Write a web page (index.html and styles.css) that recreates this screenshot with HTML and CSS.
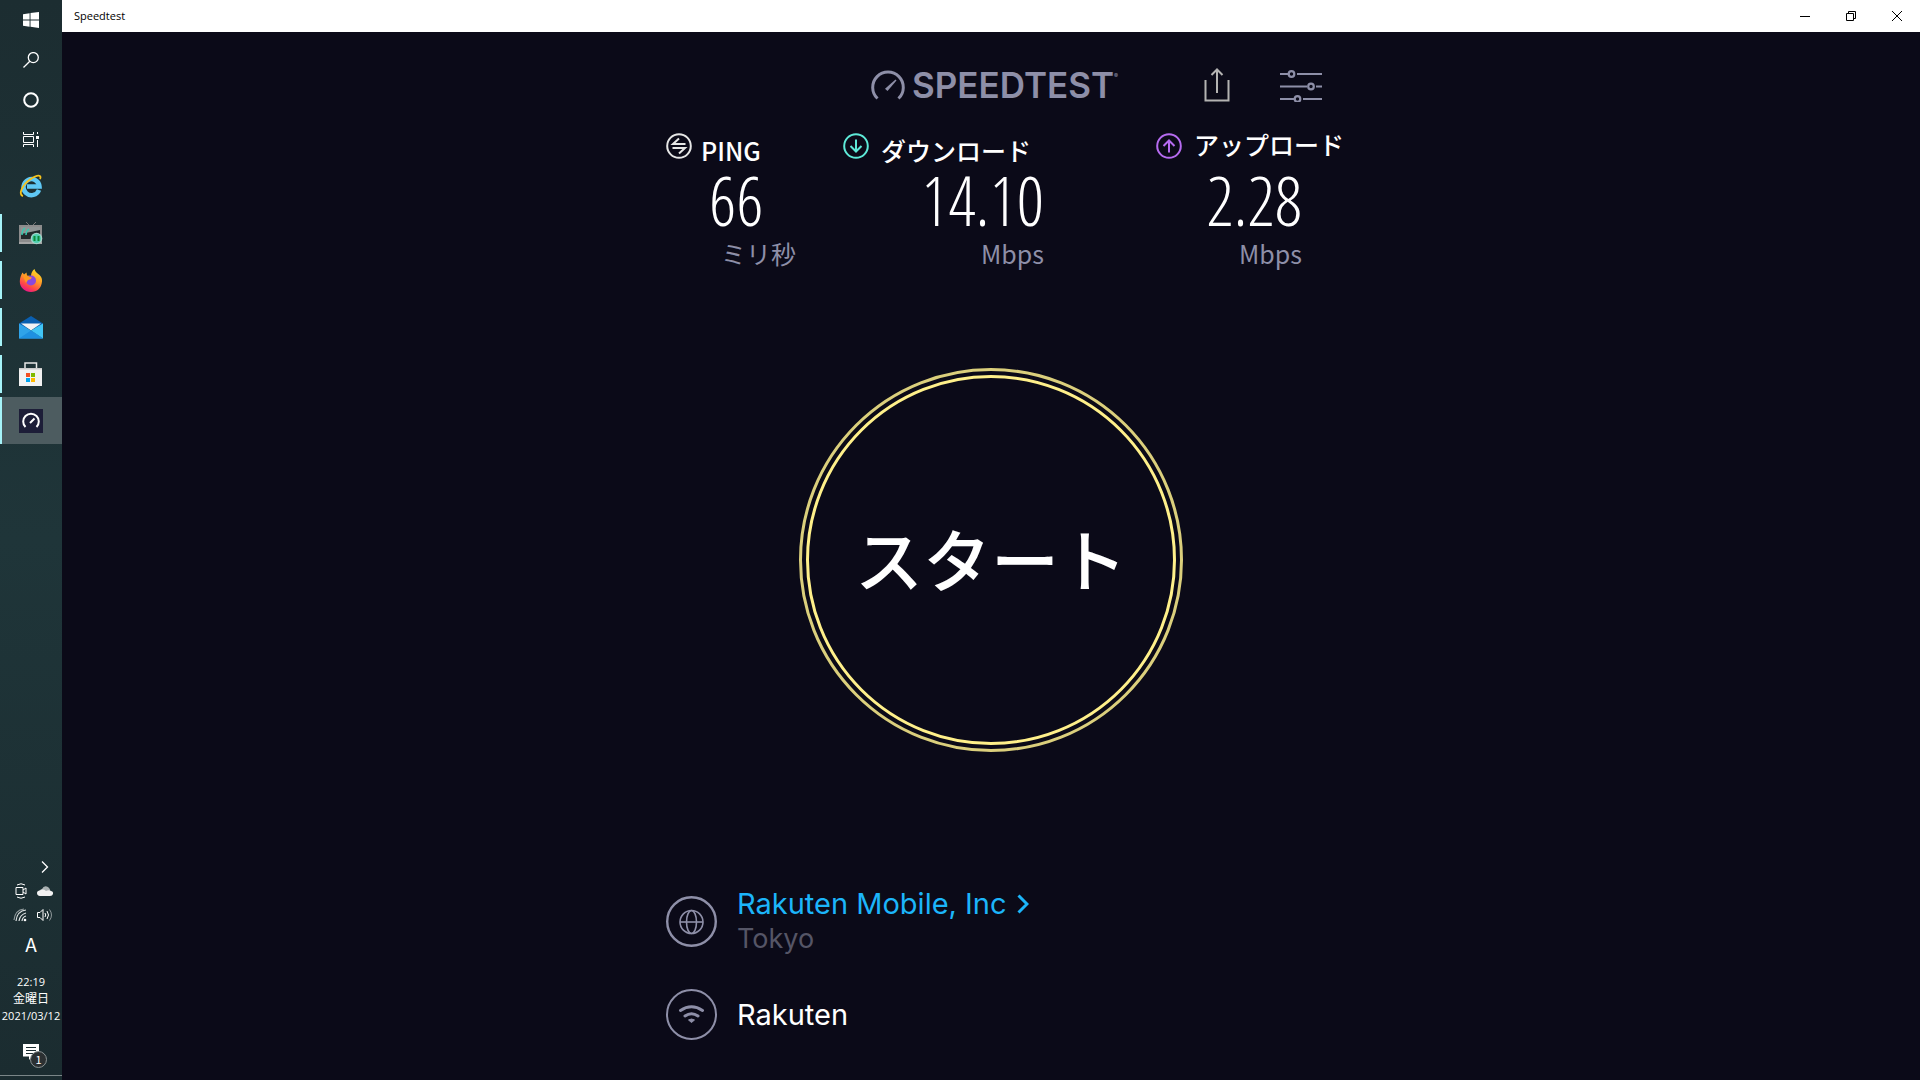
FILE: index.html
```html
<!DOCTYPE html>
<html lang="ja">

<head>
    <meta charset="UTF-8">
    <meta name="viewport" content="width=device-width, initial-scale=1.0">
    <title>Speedtest</title>
    <link rel="stylesheet" href="styles.css">
</head>

<body>
    <nav class="taskbar">
        <div class="system-buttons">
            <button class="task" type="button" aria-label="Start">
                <svg width="16" height="16" viewBox="0 0 16 16" fill="#fff"><path d="M0 2.2L6.6 1.2V7.5H0zM7.5 1.1L16 0v7.5H7.5zM0 8.4h6.6v6.3L0 13.8zM7.5 8.4H16V16l-8.5-1.2z"/></svg>
            </button>
            <button class="task" type="button" aria-label="Search">
                <svg width="16" height="16" viewBox="0 0 16 16" fill="none" stroke="#fff" stroke-width="1.3"><circle cx="10.3" cy="5.6" r="5"/><path d="M6.8 9.2L.5 15.5"/></svg>
            </button>
            <button class="task" type="button" aria-label="Cortana">
                <svg width="16" height="16" viewBox="0 0 16 16" fill="none" stroke="#fff" stroke-width="2"><circle cx="8" cy="8" r="6.8"/></svg>
            </button>
            <button class="task" type="button" aria-label="Task view">
                <svg width="16" height="16" viewBox="0 0 16 16" fill="none" stroke="#fff"><path d="M.5 0v2.5h10V0M.5 15v-2.5h10V15M.5 4.500h10v6H.5zM14.500 0v2M14.500 8v7"/><path d="M13 4h3v3h-3z" fill="#fff" stroke="none"/></svg>
            </button>
        </div>
        <div class="pinned-apps">
            <button class="task" type="button" aria-label="Internet Explorer">
                <svg width="24" height="24" viewBox="0 0 24 24" fill="none">
                    <path d="M20 16A8 8 0 1 1 20.500 12.500H8" stroke="#5fc8f5" stroke-width="4.500"/>
                    <path d="M4 22C-1 21 3 11 11 5.500S23 1 21 5" stroke="#f5c21d" stroke-width="1.800"/>
                </svg>
            </button>
            <button class="task running" type="button" aria-label="TV">
                <svg width="24" height="24" viewBox="0 0 24 24">
                    <path d="M7 1l3 3M17 1l-3 3" stroke="#777"/>
                    <path d="M0 4h23v17H0z" fill="#8c8c8c"/>
                    <path d="M2 6h19v12H2z" fill="#22292b"/>
                    <path d="M2 6h19v3L2 13z" fill="#8f9595"/>
                    <path d="M3 14q0-5 3-7M7 14q0-4 3-6" stroke="#38c9ae" stroke-width="1.500" fill="none"/>
                    <path d="M0 21h23v2H0z" fill="#a5a5a5"/>
                    <circle cx="17.500" cy="17.500" r="5.800" fill="#a5d3ca"/>
                    <circle cx="17.500" cy="17.500" r="4.500" fill="#4fcfae"/>
                    <path d="M14.500 15h2v5h-2zM18.500 15h2v5h-2z" fill="#0d8a3a"/>
                </svg>
            </button>
            <button class="task running" type="button" aria-label="Firefox">
                <svg width="24" height="24" viewBox="0 0 24 24">
                    <defs>
                        <linearGradient id="fox" x1=".8" y1="0" x2=".3" y2="1">
                            <stop offset="0" stop-color="#ffe226"/>
                            <stop offset=".45" stop-color="#ff9a28"/>
                            <stop offset=".75" stop-color="#ff4a45"/>
                            <stop offset="1" stop-color="#e8118c"/>
                        </linearGradient>
                    </defs>
                    <path d="M3.500 4.500l1.500 2 2.500-2 .5 3 4 .5C12 5 13.500 2.500 15.500 1c.5 3 3 4 5 6 2 2 2.800 4 2.500 6.500C22.500 20 18 24 12 24S.8 19.500.8 13.500c0-3.500 1.200-6.500 2.700-9z" fill="url(#fox)"/>
                    <circle cx="12" cy="12.500" r="5" fill="#8a48dd"/>
                    <path d="M4 8q4-1 7 1l2 .5q-1 2-4 2.500l-2 3z" fill="#ff9a20"/>
                </svg>
            </button>
            <button class="task running" type="button" aria-label="Mail">
                <svg width="24" height="24" viewBox="0 0 24 24">
                    <path d="M0 8.500L12 1l12 7.500v5H0z" fill="#0a5fb0"/>
                    <path d="M2 8.500h20l-10 7z" fill="#f3f3f5"/>
                    <path d="M0 8.500l12 7 12 8H0z" fill="#2fa3e9"/>
                    <path d="M24 8.500l-12 7 12 8z" fill="#41c5f5"/>
                    <path d="M12 15.500l12 8H0z" fill="#1e90e0"/>
                </svg>
            </button>
            <button class="task running" type="button" aria-label="Microsoft Store">
                <svg width="24" height="24" viewBox="0 0 24 24">
                    <path d="M6 7V1h11.500v6" fill="none" stroke="#e8e8e8" stroke-width="1.500"/>
                    <path d="M0 6h23v18H0z" fill="#f2f2f2"/>
                    <path d="M0 6h23v1.500H0z" fill="#ccc"/>
                    <path d="M7 11h4v4H7z" fill="#f25022"/><path d="M12 11h4v4h-4z" fill="#7fba00"/>
                    <path d="M7 16h4v4H7z" fill="#00a4ef"/><path d="M12 16h4v4h-4z" fill="#ffb900"/>
                </svg>
            </button>
            <button class="task running active" type="button" aria-label="Speedtest">
                <svg width="24" height="24" viewBox="0 0 24 24" fill="none" stroke="#fff" stroke-width="2">
                    <path d="M0 0h24v24H0z" fill="#1d1e38" stroke="none"/>
                    <path d="M6.500 18A7.800 7.800 0 1 1 17.500 18M11 14l4.500-4.500"/>
                </svg>
            </button>
        </div>
        <div class="tray">
            <div class="tray-icons">
                <span></span>
                <button class="tray-button" type="button" aria-label="Show hidden icons">
                    <svg width="16" height="16" viewBox="0 0 16 16" fill="none" stroke="#fff" stroke-width="1.300"><path d="M5 2.500L10.500 8 5 13.500"/></svg>
                </button>
                <svg width="16" height="16" viewBox="0 0 16 16" fill="none" stroke="#fff"><path d="M3 4.500h7v7H3zM10 7l3-2v6l-3-2M4 2q4-2.500 8 0M4 14q4 2.500 8 0"/></svg>
                <svg width="16" height="16" viewBox="0 0 16 16"><path d="M2 11q-1-4 3-5 2-4 6-2 3 2 2 6z" fill="#a9b0b1"/><path d="M3 13q-3-.5-3-3t3-2.500q3-2 6 .5 3-1.500 5 0 2.500.5 2 3-.5 2-3 2z" fill="#f2f2f2"/></svg>
                <svg width="16" height="16" viewBox="0 0 16 16" fill="none" stroke="#dfe4e4" stroke-width="1.200"><path d="M3 14Q4 4 13 3M6 14q1-6.500 7-8M9 14q.5-4 4-5" /><path d="M1 13Q2 3 11 2" opacity=".6"/><circle cx="12" cy="13" r="1.300" fill="#fff" stroke="none"/></svg>
                <svg width="16" height="16" viewBox="0 0 16 16" fill="none" stroke="#fff"><path d="M.5 5.500H3l3-3v11l-3-3H.5zM8 6q1.500 2 0 4M10 4q3 4 0 8"/><path d="M12.500 2.500q4 5.500 0 11" opacity=".5"/></svg>
            </div>
            <button class="ime" type="button">A</button>
            <div class="clock">
                <span>22:19</span>
                <span class="weekday">金曜日</span>
                <span>2021/03/12</span>
            </div>
            <button class="notifications" type="button" aria-label="Notifications">
                <svg width="16" height="16" viewBox="0 0 16 16"><path d="M0 0h16v12.500H9L6 16v-3.500H0z" fill="#fff"/><path d="M3 3.500h10M3 6.500h10M3 9.500h7" stroke="#1c2d31"/></svg>
                <span class="badge">1</span>
            </button>
        </div>
    </nav>

    <div class="window">
        <header class="title-bar">
            <span class="window-title">Speedtest</span>
            <button class="window-button" type="button" aria-label="Minimize">
                <svg width="10" height="10" viewBox="0 0 10 10" stroke="#000"><path d="M0 5.500h10"/></svg>
            </button>
            <button class="window-button" type="button" aria-label="Restore">
                <svg width="10" height="10" viewBox="0 0 10 10" stroke="#000" fill="none"><path d="M.5 2.500h7v7h-7zM2.500 2.500v-2h7v7h-2"/></svg>
            </button>
            <button class="window-button" type="button" aria-label="Close">
                <svg width="10" height="10" viewBox="0 0 10 10" stroke="#000"><path d="M0 0l10 10M10 0L0 10"/></svg>
            </button>
        </header>

        <main class="app">
            <div class="app-header">
                <h1 class="logo">
                    <svg width="34" height="30" viewBox="0 0 34 30" fill="none" stroke="#8e8fa8" stroke-width="3"><path d="M6.500 28.500a15.300 15.300 0 1 1 21 0"/><path d="M14 18.800L24.500 9.500l1 1L16.500 21z" fill="#8e8fa8" stroke="none"/></svg>
                    <span>SPEEDTEST<sup>®</sup></span>
                </h1>
                <button class="share" type="button" aria-label="Share">
                    <svg width="26" height="34" viewBox="0 0 26 34" fill="none" stroke="#b4b3b2" stroke-width="2"><path d="M1.500 12v20.500h23V12M13 25V2M7.500 7L13 1.500 18.500 7"/></svg>
                </button>
                <button class="settings" type="button" aria-label="Settings">
                    <svg width="42" height="34" viewBox="0 0 42 34" fill="none" stroke="#8e8fa8" stroke-width="2.200"><path d="M0 6h8M17 6h25M0 18.500h27M36 18.500h6M0 31h14M23 31h19"/><circle cx="11.500" cy="6" r="2.800"/><circle cx="31" cy="18.500" r="2.800"/><circle cx="17.500" cy="31" r="2.800"/></svg>
                </button>
            </div>

            <section class="stats">
                <div class="stat ping">
                    <h2 class="stat-label">
                        <svg width="26" height="26" viewBox="0 0 26 26" fill="none" stroke="#e6e6e6" stroke-width="2"><circle cx="13" cy="13" r="11.800"/><path d="M19.500 11H7l6-5.500M6.500 15H19l-6 5.500"/></svg>
                        <span>PING</span>
                    </h2>
                    <p class="value">66</p>
                    <p class="unit">ミリ秒</p>
                </div>
                <div class="stat download">
                    <h2 class="stat-label">
                        <svg width="26" height="26" viewBox="0 0 26 26" fill="none" stroke="#5eead8" stroke-width="2"><circle cx="13" cy="13" r="11.800"/><path d="M13 6.500v12M7.500 13l5.500 5.500 5.500-5.500"/></svg>
                        <span>ダウンロード</span>
                    </h2>
                    <p class="value">14.10</p>
                    <p class="unit">Mbps</p>
                </div>
                <div class="stat upload">
                    <h2 class="stat-label">
                        <svg width="26" height="26" viewBox="0 0 26 26" fill="none" stroke="#b66bf0" stroke-width="2"><circle cx="13" cy="13" r="11.800"/><path d="M13 19.500v-12M7.500 13L13 7.500l5.500 5.500"/></svg>
                        <span>アップロード</span>
                    </h2>
                    <p class="value">2.28</p>
                    <p class="unit">Mbps</p>
                </div>
            </section>

            <div class="start-area">
                <button class="start" type="button"><span>スタート</span></button>
            </div>

            <section class="connections">
                <div class="connection">
                    <svg width="51" height="51" viewBox="0 0 51 51" fill="none" stroke="#8e8fa8" stroke-width="2"><circle cx="25.500" cy="25.500" r="24.300" stroke-width="2.400"/><g stroke-width="1.600"><circle cx="25.500" cy="26" r="11.500"/><ellipse cx="25.500" cy="26" rx="5" ry="11.500"/><path d="M14 26h23"/></g></svg>
                    <div>
                        <a class="server" href="#">Rakuten Mobile, Inc
                            <svg width="12" height="20" viewBox="0 0 12 20" fill="none" stroke="#1cb5fa" stroke-width="3"><path d="M1.500 1.500L10 10l-8.500 8.500"/></svg>
                        </a>
                        <p class="city">Tokyo</p>
                    </div>
                </div>
                <div class="connection">
                    <svg width="51" height="51" viewBox="0 0 51 51" fill="none" stroke="#8e8fa8"><circle cx="25.500" cy="25.500" r="24.500" stroke-width="2"/><path d="M14.500 21.500q11-7.500 22 0M19 27q6.500-4.500 13 0" stroke-width="3" stroke-linecap="round"/><path d="M22.500 31q3-2 6 0l-3 2.500z" fill="#8e8fa8"/></svg>
                    <p class="network">Rakuten</p>
                </div>
            </section>
        </main>
    </div>
</body>

</html>
```
FILE: styles.css
```css
* {
    box-sizing: border-box;
}

body {
    display: flex;
    min-height: 100vh;
    margin: 0;
    background-color: #0b0a18;
    color: #fff;
    font-family: "Noto Sans CJK JP", sans-serif;
}

h1,
h2,
p {
    margin: 0;
    font-weight: normal;
}

button {
    display: flex;
    align-items: center;
    justify-content: center;
    padding: 0;
    border: none;
    background: none;
    color: inherit;
    font-family: inherit;
    cursor: pointer;
}

svg {
    display: block;
    flex-shrink: 0;
}

/* Taskbar */
.taskbar {
    display: flex;
    flex-direction: column;
    flex-shrink: 0;
    width: 62px;
    background: linear-gradient(#1c2d31, #1f3539 50%, #1b2c30);
}

.task {
    width: 100%;
    height: 40px;
}

.pinned-apps {
    padding-top: 2px;
}

.pinned-apps .task {
    height: 47px;
}

.running::before {
    content: "";
    width: 2px;
    height: 38px;
    background-color: #a5f3f8;
}

.running svg {
    margin: 0 auto;
}

.running {
    padding-right: 2px;
}

.active {
    background-color: #4d5c60;
}

.active::before {
    height: 100%;
}

.tray {
    display: flex;
    flex-direction: column;
    align-items: center;
    margin-top: auto;
    padding-bottom: 15px;
    border-bottom: 1px solid #7b8688;
    margin-bottom: 4px;
}

.tray-icons {
    display: grid;
    grid-template-columns: 16px 16px;
    gap: 8px;
    padding-left: 4px;
}

.ime {
    height: 40px;
    font-size: 19px;
}

.clock {
    display: flex;
    flex-direction: column;
    align-items: center;
    margin-top: 10px;
    font-family: "Open Sans", "Noto Sans CJK JP", sans-serif;
    font-size: 11px;
    line-height: 17px;
}

.weekday {
    font-size: 12px;
}

.notifications {
    position: relative;
    margin-top: 20px;
}

.badge {
    position: absolute;
    top: 7px;
    left: 7px;
    width: 17px;
    height: 17px;
    border: 1px solid #8b9394;
    border-radius: 50%;
    background-color: #2b3032;
    font-size: 11px;
    line-height: 15px;
}

/* Window */
.window {
    display: flex;
    flex: 1;
    flex-direction: column;
}

.title-bar {
    display: flex;
    height: 32px;
    background-color: #fff;
    color: #000;
}

.window-title {
    flex: 1;
    padding-left: 12px;
    font-family: "Open Sans", sans-serif;
    font-size: 11px;
    line-height: 32px;
}

.window-button {
    width: 46px;
}

.app {
    display: flex;
    flex: 1;
    flex-direction: column;
    width: 100%;
    max-width: 702px;
    margin: 0 auto;
    padding: 36px 0 40px;
}

.app-header {
    display: flex;
    align-items: center;
    padding-left: 231px;
}

.logo {
    display: flex;
    align-items: center;
    gap: 7px;
    width: 333px;
    color: #8e8fa8;
    font-family: Inter, sans-serif;
    font-size: 35px;
    font-weight: 600;
    line-height: 34px;
}

.logo sup {
    font-size: 6px;
    line-height: 0;
    vertical-align: 20px;
}

.settings {
    margin-left: 50px;
}

/* Results */
.stats {
    display: grid;
    grid-template-columns: 177px 313px 1fr;
    padding: 31px 0 0 26px;
}

.stat-label {
    display: flex;
    gap: 9px;
    height: 37px;
    font-size: 25px;
    font-weight: 500;
    line-height: 34px;
    white-space: nowrap;
}

.download .stat-label,
.upload .stat-label {
    gap: 12px;
}

.upload .stat-label {
    line-height: 22px;
}

.value {
    font-family: "Open Sans Condensed Light", "Open Sans Condensed", "Open Sans", sans-serif;
    font-size: 68px;
    font-weight: 300;
    line-height: 60px;
}

.unit {
    color: #8e8fa8;
    font-size: 25px;
    line-height: 46px;
}

.ping .value {
    padding-left: 43px;
}

.ping .unit {
    padding-left: 55px;
}

.download .value,
.download .unit {
    width: 201px;
    text-align: right;
}

.upload .value,
.upload .unit {
    width: 146px;
    text-align: right;
}

/* Start button */
.start-area {
    display: flex;
    flex: 1;
    align-items: center;
    padding: 0 0 42px 159px;
}

.start {
    width: 384px;
    height: 384px;
    padding: 4px;
    border: 3px solid #dbcf7c;
    border-radius: 50%;
}

.start span {
    width: 100%;
    height: 100%;
    border: 3px solid #fff08a;
    border-radius: 50%;
    font-size: 68px;
    font-weight: 500;
    line-height: 360px;
}

/* Server and network */
.connections {
    display: flex;
    flex-direction: column;
    gap: 33px;
    padding-left: 26px;
    font-family: Inter, sans-serif;
    font-size: 29px;
}

.connection {
    display: flex;
    align-items: center;
    gap: 20px;
}

.server {
    display: flex;
    align-items: center;
    gap: 10px;
    color: #1cb5fa;
    line-height: 36px;
    text-decoration: none;
}

.city {
    color: #555566;
    font-size: 27px;
    line-height: 34px;
}
```
